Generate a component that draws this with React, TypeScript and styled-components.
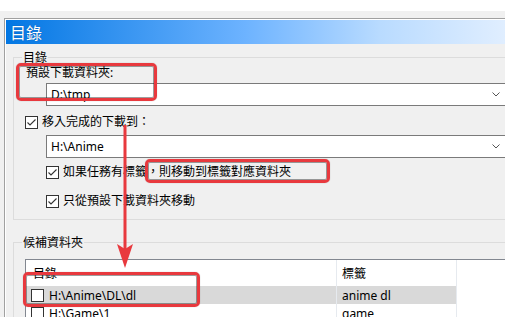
import React from 'react'
import styled, { createGlobalStyle } from 'styled-components'

const RED = '#e8393e'

const GlobalStyle = createGlobalStyle`
  html, body {
    margin: 0;
    background: #fff;
  }
  body {
    font: 12px "Noto Sans", "Noto Sans CJK TC", sans-serif;
    color: #000;
  }
`

const Screen = styled.div`
  position: relative;
  width: 505px;
  height: 317px;
  overflow: hidden;
  padding-top: 11px;
  box-sizing: border-box;
  background: #fff;
`

const Backdrop = styled.div`
  height: 306px;
  box-sizing: border-box;
  padding: 7px 0 0 4px;
  background: #f0f0f0;
`

const Window = styled.div`
  height: 100%;
  box-sizing: border-box;
  border-top: 1px solid #a0a0a0;
  border-left: 1px solid #a0a0a0;
  padding: 1px 0 0 1px;
  box-shadow: inset 1px 1px 0 #fff;
`

const TitleBar = styled.div`
  height: 24px;
  padding-left: 4px;
  background: linear-gradient(90deg, #0377e3 0%, #6db3ff 48%, #b9dbff 75%, #e0eeff 100%);
  color: #fff;
  font: 16px/24px "Noto Sans CJK TC", sans-serif;
  text-shadow: 0 0 1px rgba(0, 40, 100, 0.6);
`

const Body = styled.div`
  padding: 5px 0 0 7px;
`

const GroupBox = styled.fieldset<{ $gap?: number }>`
  margin: ${(p) => p.$gap ?? 0}px 0 0 0;
  padding: 0;
  width: 560px;
  border: 1px solid #dcdcdc;
  min-width: 0;
  legend {
    margin-left: 8px;
    padding: 0 1px;
    line-height: 16px;
    font-family: "Noto Sans CJK TC", sans-serif;
  }
`

const GroupContent = styled.div<{ $bottom?: number }>`
  padding: 0 0 ${(p) => p.$bottom ?? 0}px 11px;
`

const FieldLabel = styled.div`
  padding-left: 1px;
  line-height: 16px;
  height: 16px;
`

const Combo = styled.div<{ $top: number; $indent: number }>`
  position: relative;
  margin: ${(p) => p.$top}px 0 0 ${(p) => p.$indent}px;
  width: 467px;
  height: 23px;
  box-sizing: border-box;
  border: 1px solid #7a7a7a;
  background: #fff;
  padding-left: 4px;
  line-height: 21px;
  display: flex;
  align-items: center;
  justify-content: space-between;
  svg {
    margin-right: 12px;
  }
`

const CheckRow = styled.div<{ $top: number; $indent?: number }>`
  display: flex;
  align-items: center;
  gap: 4px;
  height: 16px;
  line-height: 16px;
  margin: ${(p) => p.$top}px 0 0 ${(p) => p.$indent ?? 0}px;
`

const Box = styled.span`
  width: 13px;
  height: 13px;
  box-sizing: border-box;
  border: 1px solid #333;
  background: #fff;
  flex: none;
  display: flex;
  svg {
    display: block;
  }
`

const List = styled.div`
  margin-top: 9px;
  border-top: 1px solid #828790;
  border-left: 1px solid #828790;
  background: #fff;
  height: 60px;
`

const Columns = styled.div<{ $selected?: boolean }>`
  display: grid;
  grid-template-columns: 311px 120px 1fr;
  & > div {
    display: flex;
    align-items: center;
    gap: 5px;
    box-sizing: border-box;
  }
  & > div:nth-child(-n + 2) {
    border-right: 1px solid #e6eaef;
    background: ${(p) => (p.$selected ? '#d9d9d9' : 'transparent')};
  }
`

const HeaderRow = styled(Columns)`
  height: 26px;
  & > div:first-child {
    padding-left: 7px;
  }
  & > div:nth-child(2) {
    padding-left: 5px;
  }
`

const Row = styled(Columns)`
  height: 18px;
  & > div:first-child {
    padding-left: 5px;
  }
  & > div:nth-child(2) {
    padding-left: 5px;
  }
`

const Mark = styled.div<{ $x: number; $y: number; $w: number; $h: number }>`
  position: absolute;
  left: ${(p) => p.$x}px;
  top: ${(p) => p.$y}px;
  width: ${(p) => p.$w}px;
  height: ${(p) => p.$h}px;
  box-sizing: border-box;
  border: 3px solid ${RED};
  border-radius: 5px;
  box-shadow: inset 0 0 0 1px rgba(40, 40, 40, 0.45), 0 0 1px rgba(0, 0, 0, 0.35);
  pointer-events: none;
`

const Arrow = styled.svg`
  position: absolute;
  left: 112px;
  top: 120px;
  pointer-events: none;
`

function Check({ on }: { on?: boolean }) {
  return (
    <Box>
      {on && (
        <svg width='11' height='11' viewBox='0 0 11 11'>
          <path d='M1.5 5.5 L4 8 L9.5 2.5' fill='none' stroke='#333' strokeWidth='1.1' />
        </svg>
      )}
    </Box>
  )
}

function Chevron() {
  return (
    <svg width='8' height='5' viewBox='0 0 8 5'>
      <path d='M0.5 0.5 L4 4 L7.5 0.5' fill='none' stroke='#555' strokeWidth='1' />
    </svg>
  )
}

export default function App() {
  return (
    <>
      <GlobalStyle />
      <Screen>
        <Backdrop>
          <Window>
            <TitleBar>目錄</TitleBar>
            <Body>
              <GroupBox>
                <legend>目錄</legend>
                <GroupContent $bottom={10}>
                  <FieldLabel>預設下載資料夾:</FieldLabel>
                  <Combo $top={2} $indent={21}>
                    D:\tmp
                    <Chevron />
                  </Combo>
                  <CheckRow $top={8}>
                    <Check on />
                    移入完成的下載到：
                  </CheckRow>
                  <Combo $top={5} $indent={21}>
                    H:\Anime
                    <Chevron />
                  </Combo>
                  <CheckRow $top={6} $indent={21}>
                    <Check on />
                    如果任務有標籤，則移動到標籤對應資料夾
                  </CheckRow>
                  <CheckRow $top={13} $indent={21}>
                    <Check on />
                    只從預設下載資料夾移動
                  </CheckRow>
                </GroupContent>
              </GroupBox>
              <GroupBox $gap={14}>
                <legend>候補資料夾</legend>
                <GroupContent>
                  <List>
                    <HeaderRow>
                      <div>目錄</div>
                      <div>標籤</div>
                      <div />
                    </HeaderRow>
                    <Row $selected>
                      <div>
                        <Check />
                        H:\Anime\DL\dl
                      </div>
                      <div>anime dl</div>
                      <div />
                    </Row>
                    <Row>
                      <div>
                        <Check />
                        H:\Game\1
                      </div>
                      <div>game</div>
                      <div />
                    </Row>
                  </List>
                </GroupContent>
              </GroupBox>
            </Body>
          </Window>
        </Backdrop>

        <Mark $x={16} $y={63} $w={141} $h={38} />
        <Mark $x={145} $y={159} $w={185} $h={24} />
        <Mark $x={23} $y={272} $w={177} $h={35} />
        <Arrow width='26' height='150' viewBox='0 0 26 150'>
          <rect x='11.5' y='5' width='3' height='125' fill={RED} />
          <path d='M5 124 L13 148 L21 124 L13 129 Z' fill={RED} />
        </Arrow>
      </Screen>
    </>
  )
}
